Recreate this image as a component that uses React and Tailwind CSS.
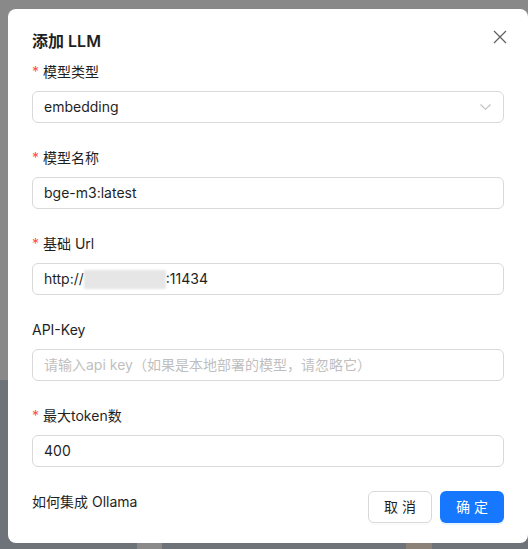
const font = { fontFamily: 'Inter, "Noto Sans CJK SC", sans-serif' }

const Label = ({ required, children }) => (
  <div className="flex items-center h-[22px] mb-2 text-sm text-[#1f1f1f]">
    {required && <span className="text-[#ff4d4f] mr-1 text-sm leading-none">*</span>}
    <span>{children}</span>
  </div>
)

const Field = ({ required, label, children }) => (
  <div className="mb-6">
    <Label required={required}>{label}</Label>
    {children}
  </div>
)

const inputBox = 'flex items-center h-8 px-[11px] border border-[#d9d9d9] rounded-md text-sm bg-white'

export default function App() {
  return (
    <div className="relative w-[528px] h-[549px] overflow-hidden bg-[#898989]" style={font}>
      {/* page behind the overlay */}
      <div className="absolute left-0 top-[380px] w-full h-[169px] bg-[#6e737a]" />
      <div className="absolute left-[137px] top-[543px] w-[25px] h-[6px] bg-[#8a8a8a]" />
      <div className="absolute left-[406px] top-[543px] w-[26px] h-[6px] bg-[#8b8178]" />

      <div className="relative ml-[8px] mt-[9px] w-[520px] rounded-lg bg-white px-6 pt-5 pb-5">
        <div className="flex items-start justify-between mb-2">
          <div className="text-base font-semibold leading-6 text-[#1f1f1f]">添加 LLM</div>
          <svg width="14" height="14" viewBox="0 0 14 14" className="mt-[1px] mr-[-3px]" fill="none" stroke="#5f5f5f" strokeWidth="1.2">
            <path d="M1 1 L13 13 M13 1 L1 13" />
          </svg>
        </div>

        <Field required label="模型类型">
          <div className={`${inputBox} justify-between text-[#1f1f1f]`}>
            <span>embedding</span>
            <svg width="11" height="6" viewBox="0 0 11 6" fill="none" stroke="#bfbfbf" strokeWidth="1.1" className="mr-[1px]">
              <path d="M0.5 0.5 L5.5 5.3 L10.5 0.5" />
            </svg>
          </div>
        </Field>

        <Field required label="模型名称">
          <div className={`${inputBox} text-[#1f1f1f]`}>bge-m3:latest</div>
        </Field>

        <Field required label="基础 Url">
          <div className={`${inputBox} text-[#1f1f1f]`}>
            <span>http://</span>
            <span className="inline-block w-[82px] h-[19px] bg-[#e6e6e6] blur-[1px]" />
            <span>:11434</span>
          </div>
        </Field>

        <Field label="API-Key">
          <div className={`${inputBox} text-[#bfbfbf]`}>请输入api key（如果是本地部署的模型，请忽略它）</div>
        </Field>

        <Field required label="最大token数">
          <div className={`${inputBox} text-[#1f1f1f]`}>400</div>
        </Field>

        <div className="flex items-start justify-between mt-px">
          <div className="text-sm leading-[22px] text-[#1f1f1f]">如何集成 Ollama</div>
          <div className="flex gap-2">
            <button className="w-16 h-8 rounded-md border border-[#d9d9d9] bg-white text-sm text-[#1f1f1f] shadow-[0_2px_0_rgba(0,0,0,0.02)]">
              取 消
            </button>
            <button className="w-16 h-8 rounded-md bg-[#1677ff] text-sm text-white shadow-[0_2px_0_rgba(5,145,255,0.1)]">
              确 定
            </button>
          </div>
        </div>
      </div>
    </div>
  )
}
